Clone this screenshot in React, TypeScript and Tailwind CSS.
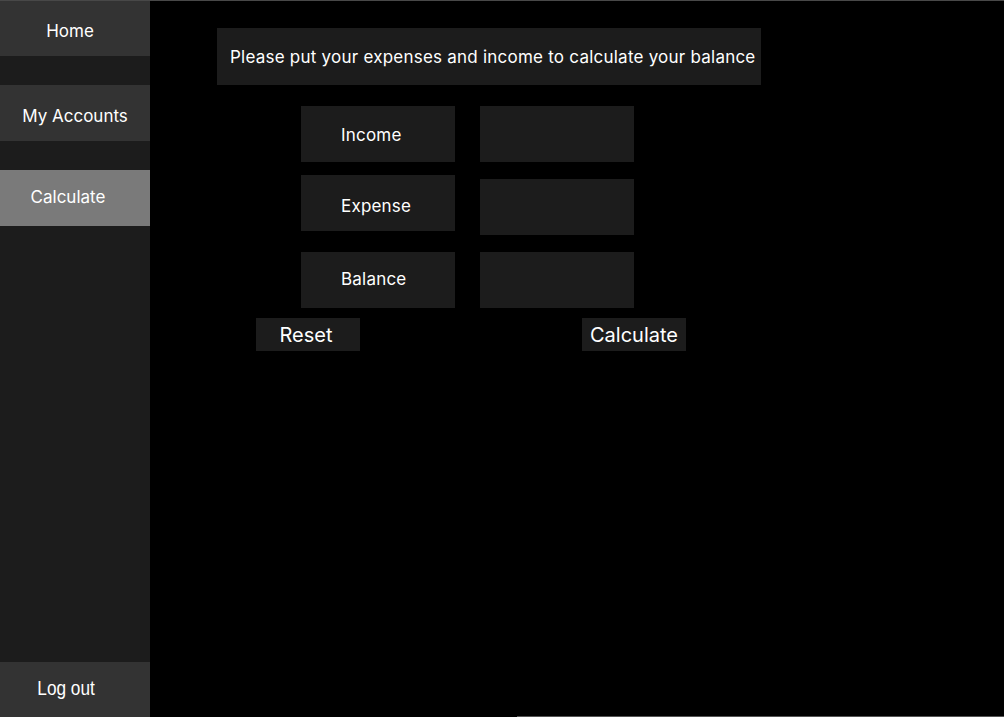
export default function App() {
  const font = { fontFamily: 'Inter, "Liberation Sans", sans-serif' };

  return (
    <div
      className="flex h-[717px] w-[1004px] overflow-hidden border-t border-[#484848] bg-black text-white"
      style={font}
    >
      {/* Sidebar */}
      <aside className="flex w-[150px] shrink-0 flex-col bg-[#1c1c1c]">
        <button className="h-[55px] bg-[#333333] pr-[10px] pt-[6px] text-[17px]">Home</button>
        <button className="mt-[29px] h-[56px] bg-[#333333] pt-[8px] text-[17px]">My Accounts</button>
        <button className="mt-[29px] h-[56px] bg-[#7a7a7a] pr-[14px] text-[17px]">Calculate</button>
        <button className="mt-auto h-[55px] bg-[#333333] pb-[4px] pr-[18px] text-[21px]">
          <span
            className="inline-block scale-x-[0.82]"
            style={{ fontFamily: '"Liberation Sans", sans-serif' }}
          >
            Log out
          </span>
        </button>
      </aside>

      {/* Main */}
      <main className="flex flex-1 flex-col">
        <div className="ml-[67px] mt-[27px] flex h-[57px] w-[544px] items-center bg-[#1c1c1c] pl-[13px] pt-[2px] text-[17px] tracking-[0.23px]">
          Please put your expenses and income to calculate your balance
        </div>

        <div className="ml-[151px] mt-[21px] flex gap-[25px]">
          <div className="flex flex-col">
            <div className="flex h-[56px] w-[154px] items-center bg-[#1c1c1c] pl-[40px] pt-[4px] text-[17px] tracking-[0.2px]">Income</div>
            <div className="mt-[13px] flex h-[56px] w-[154px] items-center bg-[#1c1c1c] pl-[40px] pt-[8px] text-[17px] tracking-[0.2px]">Expense</div>
            <div className="mt-[21px] flex h-[56px] w-[154px] items-center bg-[#1c1c1c] pl-[40px] text-[17px] tracking-[0.2px]">Balance</div>
          </div>
          <div className="flex flex-col">
            <input className="h-[56px] w-[154px] bg-[#1c1c1c] px-3 text-[17px] outline-none" />
            <input className="mt-[17px] h-[56px] w-[154px] bg-[#1c1c1c] px-3 text-[17px] outline-none" />
            <input className="mt-[17px] h-[56px] w-[154px] bg-[#1c1c1c] px-3 text-[17px] outline-none" />
          </div>
        </div>

        <div className="ml-[106px] mt-[10px] flex gap-[222px]">
          <button className="h-[33px] w-[104px] bg-[#1c1c1c] pr-[4px] text-[20px]">Reset</button>
          <button className="h-[33px] w-[104px] bg-[#1c1c1c] text-[20px]">Calculate</button>
        </div>

        <div className="ml-auto mt-auto h-px w-[487px] bg-[#555555]" />
      </main>
    </div>
  );
}
